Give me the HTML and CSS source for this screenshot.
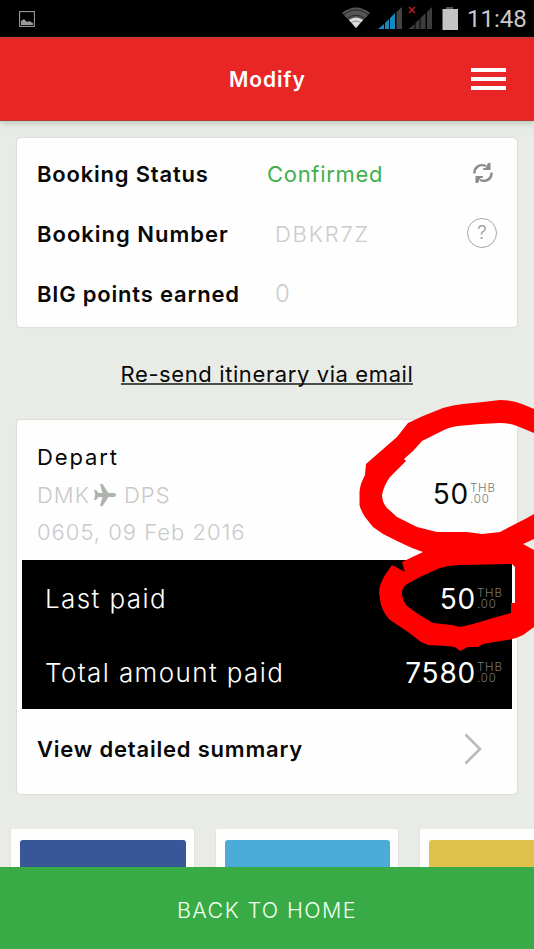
FILE: index.html
```
<!DOCTYPE html>
<html lang="en">
<head>
  <meta charset="UTF-8">
  <title>Modify</title>
  <link rel="stylesheet" href="styles.css">
</head>
<body>

  <div class="statusbar">
    <svg class="picture" width="16" height="16" viewBox="0 0 16 16">
      <rect x=".6" y=".6" width="14.8" height="14.8" fill="none" stroke="#999" stroke-width="1.1"/>
      <path d="M2 14v-4l3-2 3 3 2-1 2 1 2 1v2z" fill="#999"/>
    </svg>
    <svg class="signals" width="118" height="26" viewBox="0 0 118 26">
      <!-- wifi -->
      <path d="M0 7Q14-4 28 7L14 22z" fill="#555"/>
      <path d="M1.500 8.500Q14-1 26.500 8.500M5 12.500Q14 6 23 12.500" fill="none" stroke="#111" stroke-width=".7"/>
      <path d="M7 14Q14 9 21 14L14 22z" fill="#ddd"/>
      <path d="M9 17Q14 13 19 17" fill="none" stroke="#555" stroke-width=".6"/>
      <!-- sim 1 -->
      <path d="M36 23l6-5v5zM43 17l4-4v10h-4zM48 12l5-5v16h-5z" fill="#1688bd"/>
      <path d="M54.500 6L60 1v22h-5.500z" fill="#444"/>
      <!-- sim 2 -->
      <path d="M66.500 23l6-5v5zM73.500 17l4-4v10h-4zM78.500 12l5-5v16h-5zM85 6l5-5v22h-5z" fill="#3c3c3c"/>
      <path d="M67 1l6 6M73 1l-6 6" stroke="#b92020" stroke-width="1.500"/>
      <!-- battery -->
      <path d="M104 1h7v2h-7z" fill="#555"/>
      <path d="M100.500 3h15.500v21h-15.500z" fill="#c4c4c4"/>
    </svg>
    <span class="clock">11:48</span>
  </div>

  <header>
    <h1>Modify</h1>
    <div class="menu"><i></i><i></i><i></i></div>
  </header>

  <main>
    <section class="card booking">
      <div class="row">
        <span class="label status-label">Booking Status</span>
        <span class="value confirmed">Confirmed</span>
        <svg class="refresh" width="20" height="20" viewBox="0 0 20 20">
          <path d="M1.500 10.500C1 4 7 .500 13 3M18.500 9.500C19 16 13 19.500 7 17" fill="none" stroke="#8c8c8c" stroke-width="2.400"/>
          <path d="M17.500 0v7H10V5.500l3-1 2-4.500zM2.500 20v-7H10v1.500l-3 1L5 20z" fill="#8c8c8c"/>
        </svg>
      </div>
      <div class="row">
        <span class="label number-label">Booking Number</span>
        <span class="value code">DBKR7Z</span>
        <span class="help">?</span>
      </div>
      <div class="row">
        <span class="label points-label">BIG points earned</span>
        <span class="value points">0</span>
      </div>
    </section>

    <a class="resend"><span>Re-send itinerary via email</span></a>

    <section class="card trip">
      <div class="depart">
        <div class="flight">
          <div class="title">Depart</div>
          <div class="route">
            <span class="from">DMK</span>
            <svg class="plane" width="22" height="22" viewBox="0 0 22 22">
              <path d="M6 0h2.500l6 9H20q2 0 2 2t-2 2h-5.500l-6 9H6l2.500-9H4.500L2 16H0l1.200-5L0 6h2l2.500 3h4z" fill="#aeb3ae"/>
            </svg>
            <span class="to">DPS</span>
          </div>
          <div class="date">0605, 09 Feb 2016</div>
        </div>
        <div class="price"><b>50</b><small>THB<br>.00</small></div>
      </div>
      <div class="paid">
        <div class="paid-row">
          <span class="last">Last paid</span>
          <div class="price"><b>50</b><small>THB<br>.00</small></div>
        </div>
        <div class="paid-row">
          <span class="total">Total amount paid</span>
          <div class="price"><b>7580</b><small>THB<br>.00</small></div>
        </div>
      </div>
      <div class="summary">
        <span class="label">View detailed summary</span>
        <svg width="18" height="32" viewBox="0 0 18 32">
          <path d="M1.500 1.500L16 16 1.500 30.500" fill="none" stroke="#b9b9b9" stroke-width="2.500"/>
        </svg>
      </div>
    </section>

    <div class="tiles">
      <div class="tile"><div class="blue"></div></div>
      <div class="tile"><div class="sky"></div></div>
      <div class="tile"><div class="gold"></div></div>
    </div>
  </main>

  <footer><span>BACK TO HOME</span></footer>

  <!-- red marker over the two amounts -->
  <svg class="marker" width="534" height="949" viewBox="0 0 534 949">
    <path fill-rule="evenodd" d="M534 409L522 404Q511 400 500 400L483 402 463 404Q453 405 443 408L423 416 408 423 397 437 382 450 366 464 365 475Q360 484 359.500 492V505Q361 511 365 517L373 527 383 534 397 541 412 548 423 552 402 562 405 572 392 565 385 575Q379 585 379 593L381 605Q384 614 390 620L408 632 421 642 428 645 446 646 455 647 460 651 468 647H478L483 644 507 640Q516 639 523 635L534 627V550L523 544 534 539V514L527 518 500 532 482 534 467 532H437L417 527 397 517 387 508Q382 502 382 495 384 485 390 477L406 461 404 459 413 451 422 441 440 432Q449 427 458 426L480 424 500 423Q509 423 517 426L534 433zM409 583L420 577 440 568Q450 565 460 565L512 564 515 567V603H511V613L493 618 473 624 460 627 452 625 433 623 418 614 407 606Q402 600 402 593 402 586 409 583z"/>
  </svg>

</body>
</html>
```
FILE: styles.css
```
* {
  box-sizing: border-box;
}

body {
  margin: 0;
  height: 949px;
  display: flex;
  flex-direction: column;
  overflow: hidden;
  position: relative;
  background: #e9ece6;
  color: #080808;
  font-family: Inter, "Liberation Sans", sans-serif;
  font-size: 22px;
  line-height: 30px;
}

.statusbar {
  height: 37px;
  flex: none;
  display: flex;
  align-items: center;
  padding: 0 9px 0 19px;
  background: #000;
}

.signals {
  margin-left: auto;
  margin-right: 7px;
}

.clock {
  width: 58px;
  color: #c8c8c8;
  font-family: Roboto, sans-serif;
  font-size: 24px;
  font-weight: 400;
  white-space: nowrap;
}

header {
  height: 84px;
  flex: none;
  display: flex;
  align-items: center;
  justify-content: space-between;
  padding: 0 28px 2px 229px;
  background: #e92626;
  border-top: 2px solid #c93631;
  border-bottom: 1px solid #b43a33;
  box-shadow: 0 1px 7px rgba(50, 80, 65, 0.35);
}

h1 {
  margin: 2px 0 0;
  color: #fff;
  font-size: 21px;
  font-weight: 600;
  letter-spacing: 0.9px;
}

.menu {
  width: 35px;
  display: flex;
  flex-direction: column;
  gap: 5px;
}

.menu i {
  height: 4px;
  background: #fff;
}

main {
  height: 746px;
  flex: none;
  overflow: hidden;
  padding: 17px 17px 0;
}

.card {
  background: #fefefe;
  border-radius: 4px;
  box-shadow: 0 0 2px rgba(90, 100, 80, 0.3);
}

.booking {
  height: 189px;
  padding: 6px 20px 0;
}

.row {
  height: 60px;
  display: flex;
  align-items: center;
}

.label {
  font-weight: 600;
  letter-spacing: 0.8px;
  white-space: nowrap;
}

.row .label {
  width: 238px;
}

.row .status-label {
  width: 230px;
}

.row .number-label {
  letter-spacing: 1px;
}

.value {
  color: #cbcbcb;
  font-weight: 300;
}

.confirmed {
  color: #42ae4c;
  font-weight: 400;
  letter-spacing: 0.7px;
}

.code {
  letter-spacing: 1.8px;
}

.points {
  font-size: 24px;
}

.refresh,
.help {
  margin-left: auto;
}

.refresh {
  margin: -3px 4px 0 auto;
}

.help {
  width: 30px;
  height: 30px;
  margin-top: -2px;
  border: 1px solid #a5a5a5;
  border-radius: 50%;
  color: #999;
  font-size: 19px;
  font-weight: 300;
  line-height: 28px;
  text-align: center;
}

.resend {
  height: 93px;
  display: flex;
  align-items: center;
  justify-content: center;
}

.resend span {
  height: 26px;
  margin-top: -4px;
  border-bottom: 2px solid #4b4d4a;
  letter-spacing: 0.6px;
  line-height: 30px;
}

.trip {
  height: 374px;
}

.depart {
  height: 140px;
  display: flex;
  justify-content: space-between;
  padding: 19px 20px 0 20px;
}

.title {
  height: 37px;
  letter-spacing: 1.9px;
  line-height: 37px;
}

.route,
.date {
  height: 38px;
  line-height: 38px;
  color: #c9c9c9;
  font-weight: 300;
  letter-spacing: 1px;
}

.route {
  height: 37px;
  display: flex;
  align-items: center;
}

.from {
  width: 57px;
}

.to {
  margin-left: 8px;
}

.price {
  display: flex;
  align-items: center;
}

.price b {
  font-size: 28px;
  font-weight: 400;
  letter-spacing: 0.8px;
}

.price small {
  width: 27px;
  margin-left: 1px;
  color: #777;
  font-size: 11.5px;
  font-weight: 300;
  letter-spacing: 0.8px;
  line-height: 11.5px;
}

.depart .price {
  height: 30px;
  margin-top: 40px;
}

.paid {
  height: 149px;
  margin: 0 5px;
  padding: 2px 8px 0 23px;
  background: #000;
  color: #fff;
}

.paid-row {
  height: 74px;
  display: flex;
  align-items: center;
  justify-content: space-between;
  font-size: 26px;
  font-weight: 300;
  letter-spacing: 1.4px;
}

.summary {
  height: 80px;
  display: flex;
  align-items: center;
  justify-content: space-between;
  padding: 0 35px 0 20px;
}

.tiles {
  display: flex;
  gap: 22px;
  margin: 35px -17px 0 -6px;
}

.tile {
  width: 182.5px;
  height: 60px;
  flex: none;
  padding: 11px 8px 0 9px;
  background: #fefefe;
  border-radius: 2px;
  box-shadow: 0 1px 2px rgba(90, 100, 80, 0.2);
}

.tile div {
  height: 60px;
  border-radius: 3px 3px 0 0;
}

.blue {
  background: #385798;
}

.sky {
  background: #4bacda;
}

.gold {
  background: #dfc14b;
}

footer {
  height: 82px;
  flex: none;
  display: flex;
  align-items: center;
  justify-content: center;
  padding-top: 3px;
  background: #38ab46;
  color: #f1fff1;
  font-size: 21.5px;
  font-weight: 300;
  letter-spacing: 1.4px;
}

.marker {
  position: absolute;
  left: 0;
  top: 0;
  fill: #fe0000;
  pointer-events: none;
}
```
